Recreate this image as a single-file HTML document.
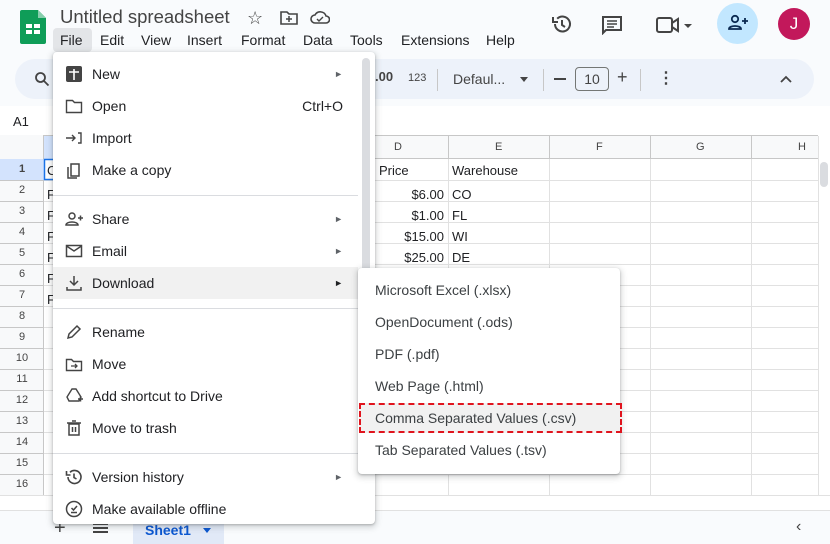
<!DOCTYPE html>
<html><head><meta charset="utf-8"><style>
*{box-sizing:border-box;margin:0;padding:0}
body{width:830px;height:544px;overflow:hidden;background:#f9fbfd;font-family:"Liberation Sans",Arial,sans-serif;color:#202124;position:relative}
.a{position:absolute}
.t{font-size:14px;white-space:nowrap}
.mi{position:absolute;left:0;width:322px;height:32px;font-size:14px;line-height:32px}
.mi .l{position:absolute;left:39px}
.mi svg{position:absolute;left:12px;top:7px}
.arr{position:absolute;right:32px;font-size:9px;color:#5f6368}
.sep{position:absolute;left:0;width:305px;height:1px;background:#dadce0}
.si{position:absolute;left:17px;font-size:14px;color:#3c4043}
.rh{position:absolute;left:0;width:44px;text-align:center;font-size:11px;color:#444}
</style></head><body>
<svg class="a" style="left:20px;top:10px" width="26" height="34" viewBox="0 0 26 34"><path d="M2 0h16l8 8v24a2 2 0 0 1-2 2H2a2 2 0 0 1-2-2V2a2 2 0 0 1 2-2z" fill="#0f9d58"/><path d="M18 0v8h8z" fill="#87ceac"/><rect x="6" y="14" width="14" height="10" fill="#fff"/><path d="M6 19h14M13 14v10" stroke="#0f9d58" stroke-width="2"/></svg>
<div class="a" style="left:60px;top:6px;font-size:18.5px;color:#444">Untitled spreadsheet</div>
<div class="a t" style="left:247px;top:8px;font-size:18px;color:#444">☆</div>
<svg class="a" style="left:280px;top:10px" width="18" height="16" viewBox="0 0 18 16"><path d="M1 2h6l2 2h8v10H1z" fill="none" stroke="#444" stroke-width="1.6"/><path d="M6 9h6M9 6v6" stroke="#444" stroke-width="1.5"/></svg>
<svg class="a" style="left:310px;top:10px" width="20" height="14" viewBox="0 0 20 14"><path d="M5 13a4 4 0 0 1 0-8 6 6 0 0 1 11 1 3.5 3.5 0 0 1 0 7z" fill="none" stroke="#444" stroke-width="1.6"/><path d="M7 9l2 2 4-4" stroke="#444" stroke-width="1.4" fill="none"/></svg>
<div class="a" style="left:53px;top:28px;width:39px;height:24px;background:#e3e5e8;border-radius:4px"></div>
<div class="a t" style="left:60px;top:32px;color:#202124">File</div>
<div class="a t" style="left:100px;top:32px">Edit</div>
<div class="a t" style="left:141px;top:32px">View</div>
<div class="a t" style="left:187px;top:32px">Insert</div>
<div class="a t" style="left:241px;top:32px">Format</div>
<div class="a t" style="left:303px;top:32px">Data</div>
<div class="a t" style="left:350px;top:32px">Tools</div>
<div class="a t" style="left:401px;top:32px">Extensions</div>
<div class="a t" style="left:486px;top:32px">Help</div>
<svg class="a" style="left:551px;top:13px" width="22" height="22" viewBox="0 0 22 22"><path d="M4 11a7.5 7.5 0 1 0 2.2-5.3" fill="none" stroke="#444" stroke-width="2"/><path d="M2 4v5h5" fill="none" stroke="#444" stroke-width="2"/><path d="M11 7v5l3 2" fill="none" stroke="#444" stroke-width="2"/></svg>
<svg class="a" style="left:601px;top:15px" width="22" height="20" viewBox="0 0 22 20"><path d="M2 2h18v13H5l-3 3z" fill="none" stroke="#444" stroke-width="2"/><path d="M6 6h10M6 9h10M6 12h7" stroke="#444" stroke-width="1.6"/></svg>
<svg class="a" style="left:655px;top:15px" width="42" height="20" viewBox="0 0 42 20"><rect x="2" y="3" width="15" height="14" rx="2" fill="none" stroke="#444" stroke-width="2"/><path d="M17 8l6-4v12l-6-4" fill="none" stroke="#444" stroke-width="2"/><path d="M29 9h8l-4 4z" fill="#444"/></svg>
<div class="a" style="left:717px;top:3px;width:41px;height:41px;border-radius:50%;background:#c2e7ff"></div>
<svg class="a" style="left:727px;top:14px" width="22" height="18" viewBox="0 0 22 18"><circle cx="8" cy="5" r="3.2" fill="none" stroke="#0b2a52" stroke-width="1.8"/><path d="M2 15c0-4 12-4 12 0z" fill="none" stroke="#0b2a52" stroke-width="1.8"/><path d="M15 7h6M18 4v6" stroke="#0b2a52" stroke-width="1.8"/></svg>
<div class="a" style="left:778px;top:8px;width:32px;height:32px;border-radius:50%;background:#c2185b;color:#fff;font-size:17px;text-align:center;line-height:32px">J</div>
<div class="a" style="left:15px;top:59px;width:799px;height:40px;border-radius:20px;background:#edf2fa"></div>
<svg class="a" style="left:34px;top:71px" width="16" height="16" viewBox="0 0 16 16"><circle cx="6.5" cy="6.5" r="4.5" fill="none" stroke="#444" stroke-width="1.8"/><path d="M10 10l4.5 4.5" stroke="#444" stroke-width="1.8"/></svg>
<div class="a" style="left:375px;top:69px;font-size:13px;font-weight:bold;color:#444">.00</div>
<div class="a" style="left:408px;top:72px;font-size:11px;color:#444">123</div>
<div class="a" style="left:437px;top:69px;width:1px;height:22px;background:#c7c7c7"></div>
<div class="a t" style="left:453px;top:71px;color:#444">Defaul...</div>
<div class="a" style="left:520px;top:77px;border:4px solid transparent;border-top:5px solid #444"></div>
<div class="a" style="left:543px;top:69px;width:1px;height:22px;background:#c7c7c7"></div>
<div class="a" style="left:554px;top:78px;width:12px;height:2px;background:#444"></div>
<div class="a" style="left:575px;top:67px;width:34px;height:24px;border:1px solid #747775;border-radius:4px;font-size:14px;text-align:center;line-height:22px;color:#444">10</div>
<div class="a t" style="left:617px;top:67px;font-size:18px;color:#444">+</div>
<div class="a" style="left:640px;top:69px;width:1px;height:22px;background:#c7c7c7"></div>
<div class="a t" style="left:658px;top:68px;font-size:16px;font-weight:bold;color:#444">⋮</div>
<svg class="a" style="left:780px;top:75px" width="12" height="8" viewBox="0 0 12 8"><path d="M1 7l5-5 5 5" fill="none" stroke="#444" stroke-width="1.8"/></svg>
<div class="a" style="left:0;top:106px;width:830px;height:30px;background:#fff"></div>
<div class="a" style="left:13px;top:114px;font-size:13px;color:#202124">A1</div>
<div class="a" style="left:0;top:135px;width:830px;height:375px;background:#fff"></div>
<div class="a" style="left:0;top:135px;width:818px;height:24px;background:#f8f9fa;border-top:1px solid #c7c7c7;border-bottom:1px solid #c7c7c7"></div>
<div class="a" style="left:0;top:135px;width:44px;height:360px;background:#f8f9fa;border-right:1px solid #c7c7c7"></div>
<div class="a" style="left:44px;top:136px;width:20px;height:23px;background:#d3e3fd"></div>
<div class="a" style="left:0;top:159px;width:44px;height:21px;background:#d3e3fd"></div>
<svg class="a" style="left:0;top:0" width="830" height="544">
<g stroke="#e1e1e1" stroke-width="1">
<path d="M44 180.5H818M44 201.5H818M44 222.5H818M44 243.5H818M44 264.5H818M44 285.5H818M44 306.5H818M44 327.5H818M44 348.5H818M44 369.5H818M44 390.5H818M44 411.5H818M44 432.5H818M44 453.5H818M44 474.5H818M44 495.5H818"/>
<path d="M448.5 159V495M549.5 159V495M650.5 159V495M751.5 159V495M818.5 136V495"/>
</g>
<g stroke="#c7c7c7"><path d="M0 180.5H44M0 201.5H44M0 222.5H44M0 243.5H44M0 264.5H44M0 285.5H44M0 306.5H44M0 327.5H44M0 348.5H44M0 369.5H44M0 390.5H44M0 411.5H44M0 432.5H44M0 453.5H44M0 474.5H44M0 495.5H44"/>
<path d="M448.5 136V159M549.5 136V159M650.5 136V159M751.5 136V159"/></g>
<rect x="44.5" y="159.5" width="10" height="20" fill="none" stroke="#1a73e8" stroke-width="1.5"/>
</svg>
<div class="rh" style="top:163px;font-weight:bold">1</div>
<div class="rh" style="top:184px">2</div><div class="rh" style="top:205px">3</div><div class="rh" style="top:226px">4</div><div class="rh" style="top:247px">5</div><div class="rh" style="top:268px">6</div><div class="rh" style="top:289px">7</div><div class="rh" style="top:310px">8</div><div class="rh" style="top:331px">9</div><div class="rh" style="top:352px">10</div><div class="rh" style="top:373px">11</div><div class="rh" style="top:394px">12</div><div class="rh" style="top:415px">13</div><div class="rh" style="top:436px">14</div><div class="rh" style="top:457px">15</div><div class="rh" style="top:478px">16</div>
<div class="a" style="left:47px;top:163px;font-size:13px">C</div>
<div class="a" style="left:47px;top:184px;font-size:13px;line-height:21px">F<br>F<br>F<br>F<br>F<br>F</div>
<div class="a" style="left:394px;top:141px;font-size:11px;color:#444">D</div>
<div class="a" style="left:495px;top:141px;font-size:11px;color:#444">E</div>
<div class="a" style="left:596px;top:141px;font-size:11px;color:#444">F</div>
<div class="a" style="left:696px;top:141px;font-size:11px;color:#444">G</div>
<div class="a" style="left:798px;top:141px;font-size:11px;color:#444">H</div>
<div class="a" style="left:379px;top:163px;font-size:13px">Price</div>
<div class="a" style="left:452px;top:163px;font-size:13px">Warehouse</div>
<div class="a" style="left:370px;top:184px;width:74px;text-align:right;font-size:13px;line-height:21px">$6.00<br>$1.00<br>$15.00<br>$25.00</div>
<div class="a" style="left:452px;top:184px;font-size:13px;line-height:21px">CO<br>FL<br>WI<br>DE</div>
<div class="a" style="left:820px;top:162px;width:8px;height:25px;border-radius:4px;background:#dadce0"></div>
<div class="a" style="left:0;top:495px;width:830px;height:15px;background:#fff;border-top:1px solid #e1e1e1"></div>
<div class="a" style="left:0;top:510px;width:830px;height:34px;background:#f9fbfd;border-top:1px solid #e1e1e1"></div>
<div class="a t" style="left:54px;top:517px;font-size:20px;color:#444">+</div>
<div class="a" style="left:93px;top:523px;width:15px;height:10px;border-top:2px solid #444;border-bottom:2px solid #444"></div>
<div class="a" style="left:93px;top:527px;width:15px;height:2px;background:#444"></div>
<div class="a" style="left:133px;top:517px;width:91px;height:27px;background:#e1e9f7"></div>
<div class="a" style="left:145px;top:522px;font-size:14px;font-weight:bold;color:#0b57d0">Sheet1</div>
<div class="a" style="left:203px;top:528px;border:4px solid transparent;border-top:5px solid #0b57d0"></div>
<div class="a t" style="left:796px;top:518px;font-size:16px;color:#444">‹</div>
<div class="a" style="left:53px;top:52px;width:322px;height:472px;background:#fff;border-radius:4px;box-shadow:0 2px 6px 2px rgba(60,64,67,.18),0 1px 2px rgba(60,64,67,.3)">
<div class="a" style="left:309px;top:6px;width:8px;height:250px;border-radius:4px;background:#dadce0"></div>
<div class="mi" style="top:6px"><svg width="18" height="18"><rect x="1" y="1" width="16" height="16" rx="2" fill="#444"/><path d="M9 4v11M4 7h10" stroke="#fff" stroke-width="1.6"/></svg><span class="l">New</span><span class="arr">►</span></div>
<div class="mi" style="top:38px"><svg width="18" height="18"><path d="M1.5 3.5h6l2 2h7v10h-15z" fill="none" stroke="#444" stroke-width="1.4"/></svg><span class="l">Open</span><span style="position:absolute;right:32px">Ctrl+O</span></div>
<div class="mi" style="top:70px"><svg width="18" height="18"><path d="M1 9h9M7 6l3 3-3 3M13 4h3v10h-3" fill="none" stroke="#444" stroke-width="1.4"/></svg><span class="l">Import</span></div>
<div class="mi" style="top:102px"><svg width="18" height="18"><path d="M6 3h8v12H6z M3 6v11h9" fill="none" stroke="#444" stroke-width="1.5"/></svg><span class="l">Make a copy</span></div>
<div class="sep" style="top:143px"></div>
<div class="mi" style="top:151px"><svg width="18" height="18"><circle cx="7" cy="6" r="3" fill="none" stroke="#444" stroke-width="1.5"/><path d="M1 15c0-4 12-4 12 0z" fill="none" stroke="#444" stroke-width="1.5"/><path d="M13 8h5M15.5 5.5v5" stroke="#444" stroke-width="1.5"/></svg><span class="l">Share</span><span class="arr">►</span></div>
<div class="mi" style="top:183px"><svg width="18" height="18"><rect x="1.5" y="3.5" width="15" height="11" fill="none" stroke="#444" stroke-width="1.5"/><path d="M1.5 4l7.5 5 7.5-5" fill="none" stroke="#444" stroke-width="1.5"/></svg><span class="l">Email</span><span class="arr">►</span></div>
<div class="a" style="left:0;top:215px;width:305px;height:32px;background:#f1f1f1"></div>
<div class="mi" style="top:215px"><svg width="18" height="18"><path d="M9 2v9M5 7l4 4 4-4M2 13v3h14v-3" fill="none" stroke="#444" stroke-width="1.5"/></svg><span class="l">Download</span><span class="arr" style="color:#202124">►</span></div>
<div class="sep" style="top:256px"></div>
<div class="mi" style="top:264px"><svg width="18" height="18"><path d="M3 15l1-4 8-8 3 3-8 8z" fill="none" stroke="#444" stroke-width="1.5"/></svg><span class="l">Rename</span></div>
<div class="mi" style="top:296px"><svg width="18" height="18"><path d="M1.5 4.5h5l2 2h8v9h-15z" fill="none" stroke="#444" stroke-width="1.4"/><path d="M6 11h6M10 9l2 2-2 2" fill="none" stroke="#444" stroke-width="1.3"/></svg><span class="l">Move</span></div>
<div class="mi" style="top:328px"><svg width="18" height="18"><path d="M7 2h4l5 8-2 4H4l-2-4z" fill="none" stroke="#444" stroke-width="1.4"/><path d="M13 12h5M15.5 9.5v5" stroke="#444" stroke-width="1.5"/></svg><span class="l">Add shortcut to Drive</span></div>
<div class="mi" style="top:360px"><svg width="18" height="18"><path d="M4 5h10v11H4zM2 4h14M7 2h4M7.5 8v5M10.5 8v5" fill="none" stroke="#444" stroke-width="1.5"/></svg><span class="l">Move to trash</span></div>
<div class="sep" style="top:401px"></div>
<div class="mi" style="top:409px"><svg width="18" height="18"><path d="M3 9a6.5 6.5 0 1 0 2-4.7" fill="none" stroke="#444" stroke-width="1.6"/><path d="M1.5 3v4h4" fill="none" stroke="#444" stroke-width="1.6"/><path d="M9 5.5v4l2.5 1.5" fill="none" stroke="#444" stroke-width="1.6"/></svg><span class="l">Version history</span><span class="arr">►</span></div>
<div class="mi" style="top:441px"><svg width="18" height="18"><circle cx="9" cy="9" r="7.5" fill="none" stroke="#444" stroke-width="1.5"/><path d="M6 12.5h6M6.5 8l2 2 3.5-4" fill="none" stroke="#444" stroke-width="1.5"/></svg><span class="l">Make available offline</span></div>
</div>
<div class="a" style="left:358px;top:268px;width:262px;height:206px;background:#fff;border-radius:4px;box-shadow:0 2px 6px 2px rgba(60,64,67,.18),0 1px 2px rgba(60,64,67,.3)">
<div class="si" style="top:14px">Microsoft Excel (.xlsx)</div>
<div class="si" style="top:46px">OpenDocument (.ods)</div>
<div class="si" style="top:78px">PDF (.pdf)</div>
<div class="si" style="top:110px">Web Page (.html)</div>
<div class="a" style="left:1px;top:135px;width:263px;height:30px;background:#f1f1f1;border:2px dashed #e0141e"></div>
<div class="si" style="top:142px">Comma Separated Values (.csv)</div>
<div class="si" style="top:174px">Tab Separated Values (.tsv)</div>
</div>
</body></html>
